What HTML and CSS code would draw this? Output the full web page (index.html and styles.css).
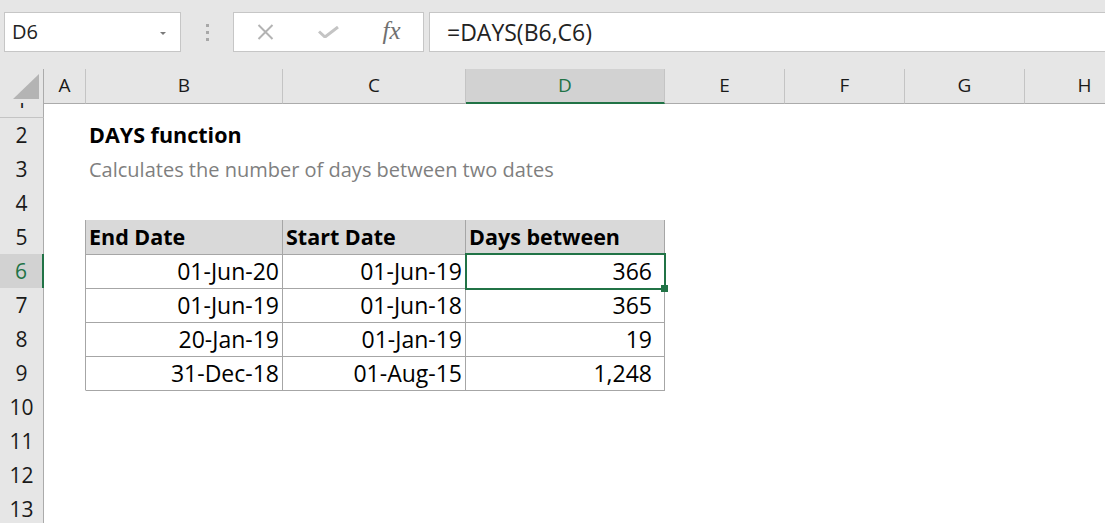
FILE: index.html
```html
<!DOCTYPE html>
<html>
<head>
<meta charset="utf-8">
<link rel="stylesheet" href="styles.css">
</head>
<body>
<div class="app">
  <div class="toolbar">
    <div class="namebox">
      <span class="nb-text">D6</span>
      <span class="nb-arrow"></span>
    </div>
    <div class="grip"><span></span><span></span><span></span></div>
    <div class="fnbox">
      <div class="fn-slot">
        <svg width="17" height="16" viewBox="0 0 17 16"><path d="M1.5 1 L15.5 15 M15.5 1 L1.5 15" stroke="#b3b3b3" stroke-width="2" fill="none"/></svg>
      </div>
      <div class="fn-slot">
        <svg width="21" height="12" viewBox="0 0 21 12"><path d="M1 5.5 L7 11 L20 1" stroke="#c4c4c4" stroke-width="3" fill="none"/></svg>
      </div>
      <div class="fn-slot"><span class="fx">fx</span></div>
    </div>
    <div class="formula">=DAYS(B6,C6)</div>
  </div>

  <div class="sheet">
    <div class="row hdr">
      <div class="corner"><svg width="27" height="26" viewBox="0 0 27 26"><polygon points="26,0 26,25 0,25" fill="#b4b4b4"/></svg></div>
      <div class="ch">A</div><div class="ch">B</div><div class="ch">C</div><div class="ch sel">D</div><div class="ch">E</div><div class="ch">F</div><div class="ch">G</div><div class="ch">H</div>
    </div>
    <div class="row r1">
      <div class="rh"><span>1</span></div>
      <div class="c"></div><div class="c"></div><div class="c"></div><div class="c"></div><div class="c"></div><div class="c"></div><div class="c"></div><div class="c"></div>
    </div>
    <div class="row">
      <div class="rh">2</div>
      <div class="c"></div><div class="c title">DAYS function</div><div class="c"></div><div class="c"></div><div class="c"></div><div class="c"></div><div class="c"></div><div class="c"></div>
    </div>
    <div class="row">
      <div class="rh">3</div>
      <div class="c"></div><div class="c sub">Calculates the number of days between two dates</div><div class="c"></div><div class="c"></div><div class="c"></div><div class="c"></div><div class="c"></div><div class="c"></div>
    </div>
    <div class="row">
      <div class="rh">4</div>
      <div class="c"></div><div class="c tt"></div><div class="c tt"></div><div class="c tt"></div><div class="c"></div><div class="c"></div><div class="c"></div><div class="c"></div>
    </div>
    <div class="row">
      <div class="rh">5</div>
      <div class="c tl"></div><div class="c th">End Date</div><div class="c th">Start Date</div><div class="c th">Days between</div><div class="c"></div><div class="c"></div><div class="c"></div><div class="c"></div>
    </div>
    <div class="row">
      <div class="rh rsel">6</div>
      <div class="c tl"></div><div class="c td">01-Jun-20</div><div class="c td">01-Jun-19</div><div class="c td num active">366<div class="selbox"><div class="handle"></div></div></div><div class="c"></div><div class="c"></div><div class="c"></div><div class="c"></div>
    </div>
    <div class="row">
      <div class="rh">7</div>
      <div class="c tl"></div><div class="c td">01-Jun-19</div><div class="c td">01-Jun-18</div><div class="c td num">365</div><div class="c"></div><div class="c"></div><div class="c"></div><div class="c"></div>
    </div>
    <div class="row">
      <div class="rh">8</div>
      <div class="c tl"></div><div class="c td">20-Jan-19</div><div class="c td">01-Jan-19</div><div class="c td num">19</div><div class="c"></div><div class="c"></div><div class="c"></div><div class="c"></div>
    </div>
    <div class="row">
      <div class="rh">9</div>
      <div class="c tl"></div><div class="c td">31-Dec-18</div><div class="c td">01-Aug-15</div><div class="c td num">1,248</div><div class="c"></div><div class="c"></div><div class="c"></div><div class="c"></div>
    </div>
    <div class="row">
      <div class="rh">10</div>
      <div class="c"></div><div class="c"></div><div class="c"></div><div class="c"></div><div class="c"></div><div class="c"></div><div class="c"></div><div class="c"></div>
    </div>
    <div class="row">
      <div class="rh">11</div>
      <div class="c"></div><div class="c"></div><div class="c"></div><div class="c"></div><div class="c"></div><div class="c"></div><div class="c"></div><div class="c"></div>
    </div>
    <div class="row">
      <div class="rh">12</div>
      <div class="c"></div><div class="c"></div><div class="c"></div><div class="c"></div><div class="c"></div><div class="c"></div><div class="c"></div><div class="c"></div>
    </div>
    <div class="row">
      <div class="rh">13</div>
      <div class="c"></div><div class="c"></div><div class="c"></div><div class="c"></div><div class="c"></div><div class="c"></div><div class="c"></div><div class="c"></div>
    </div>
  </div>
</div>
</body>
</html>
```
FILE: styles.css
```css
* { box-sizing: border-box; }
html, body {
  margin: 0;
  padding: 0;
  width: 1105px;
  height: 523px;
  overflow: hidden;
  background: #ffffff;
  font-family: "Open Sans", "Noto Sans", sans-serif;
  color: #000;
}
.app { width: 1105px; overflow: hidden; }

/* ---------- toolbar ---------- */
.toolbar {
  height: 69px;
  background: #e6e6e6;
  display: flex;
  align-items: flex-start;
  padding: 12px 0 0 4px;
}
.namebox {
  width: 177px;
  height: 40px;
  background: #fff;
  border: 1px solid #c6c6c6;
  display: flex;
  align-items: center;
  justify-content: space-between;
  padding: 0 14px 0 7px;
}
.nb-text {
  font-size: 20px;
  line-height: 38px;
  color: #222;
}
.nb-arrow {
  width: 0;
  height: 0;
  border-left: 3px solid transparent;
  border-right: 3px solid transparent;
  border-top: 3px solid #7a7a7a;
  margin-top: 2px;
}
.grip {
  width: 52px;
  height: 40px;
  display: flex;
  flex-direction: column;
  align-items: center;
  justify-content: center;
  gap: 4px;
  padding-top: 1px;
}
.grip span {
  width: 3px;
  height: 3px;
  background: #a8a8a8;
}
.fnbox {
  width: 191px;
  height: 40px;
  background: #fff;
  border: 1px solid #c6c6c6;
  display: flex;
}
.fn-slot {
  flex: 1;
  display: flex;
  align-items: center;
  justify-content: center;
}
.fn-slot svg { display: block; }
.fx {
  font-family: "Liberation Serif", "DejaVu Serif", serif;
  font-style: italic;
  font-size: 25px;
  color: #707070;
  line-height: 38px;
  margin-top: -2px;
}
.formula {
  flex: 1;
  margin-left: 5px;
  margin-right: -20px;
  height: 40px;
  background: #fff;
  border: 1px solid #c6c6c6;
  font-size: 23px;
  line-height: 38px;
  padding-left: 17px;
  color: #222;
}

/* ---------- sheet grid ---------- */
.sheet { width: 1145px; }
.row {
  display: grid;
  grid-template-columns: 44px 42px 197px 183px 199px 120px 120px 120px 120px;
  height: 34px;
}
.row.r1 { height: 15px; }

.c {
  border-right: 1px solid transparent;
  border-bottom: 1px solid transparent;
  white-space: nowrap;
  line-height: 34px;
  font-size: 23px;
  position: relative;
}

/* headers */
.hdr { background: #e6e6e6; }
.corner {
  border-right: 1px solid #ababab;
  border-bottom: 1px solid #ababab;
  display: flex;
  align-items: flex-end;
  justify-content: flex-end;
  padding: 0 3px 3px 0;
}
.corner svg { display: block; }
.ch {
  border-right: 1px solid #c4c4c4;
  border-bottom: 1px solid #ababab;
  text-align: center;
  font-size: 19px;
  line-height: 33px;
  color: #1a1a1a;
}
.ch.sel {
  background: #d2d2d2;
  border-bottom: 2px solid #217346;
  color: #217346;
}
.rh {
  background: #e6e6e6;
  border-right: 1px solid #ababab;
  border-bottom: 1px solid #c4c4c4;
  text-align: center;
  font-size: 21px;
  line-height: 34px;
  color: #1a1a1a;
}
.r1 .rh {
  display: flex;
  align-items: flex-end;
  justify-content: center;
  overflow: hidden;
}
.r1 .rh span {
  display: block;
  flex: none;
  line-height: 34px;
  height: 34px;
}
.rh.rsel {
  background: #d2d2d2;
  border-right: 2px solid #217346;
  color: #217346;
}

/* content */
.title {
  font-weight: 700;
  font-size: 21.5px;
  padding-left: 3px;
}
.sub {
  font-size: 20px;
  line-height: 36px;
  color: #7f7f7f;
  padding-left: 3px;
}
.tt { border-bottom-color: #a6a6a6; }
.tl { border-right-color: #a6a6a6; }
.th {
  background: #d9d9d9;
  border-right-color: #a6a6a6;
  border-bottom-color: #a6a6a6;
  font-weight: 700;
  font-size: 21.5px;
  padding-left: 3px;
}
.td {
  border-right-color: #a6a6a6;
  border-bottom-color: #a6a6a6;
  text-align: right;
  padding-right: 3px;
}
.td.num { padding-right: 12px; }

.selbox {
  position: absolute;
  top: -1px;
  left: -1px;
  right: -2px;
  bottom: -2px;
  border: 2px solid #217346;
  z-index: 2;
}
.handle {
  position: absolute;
  width: 7px;
  height: 7px;
  right: -4px;
  bottom: -4px;
  background: #217346;
}
```
